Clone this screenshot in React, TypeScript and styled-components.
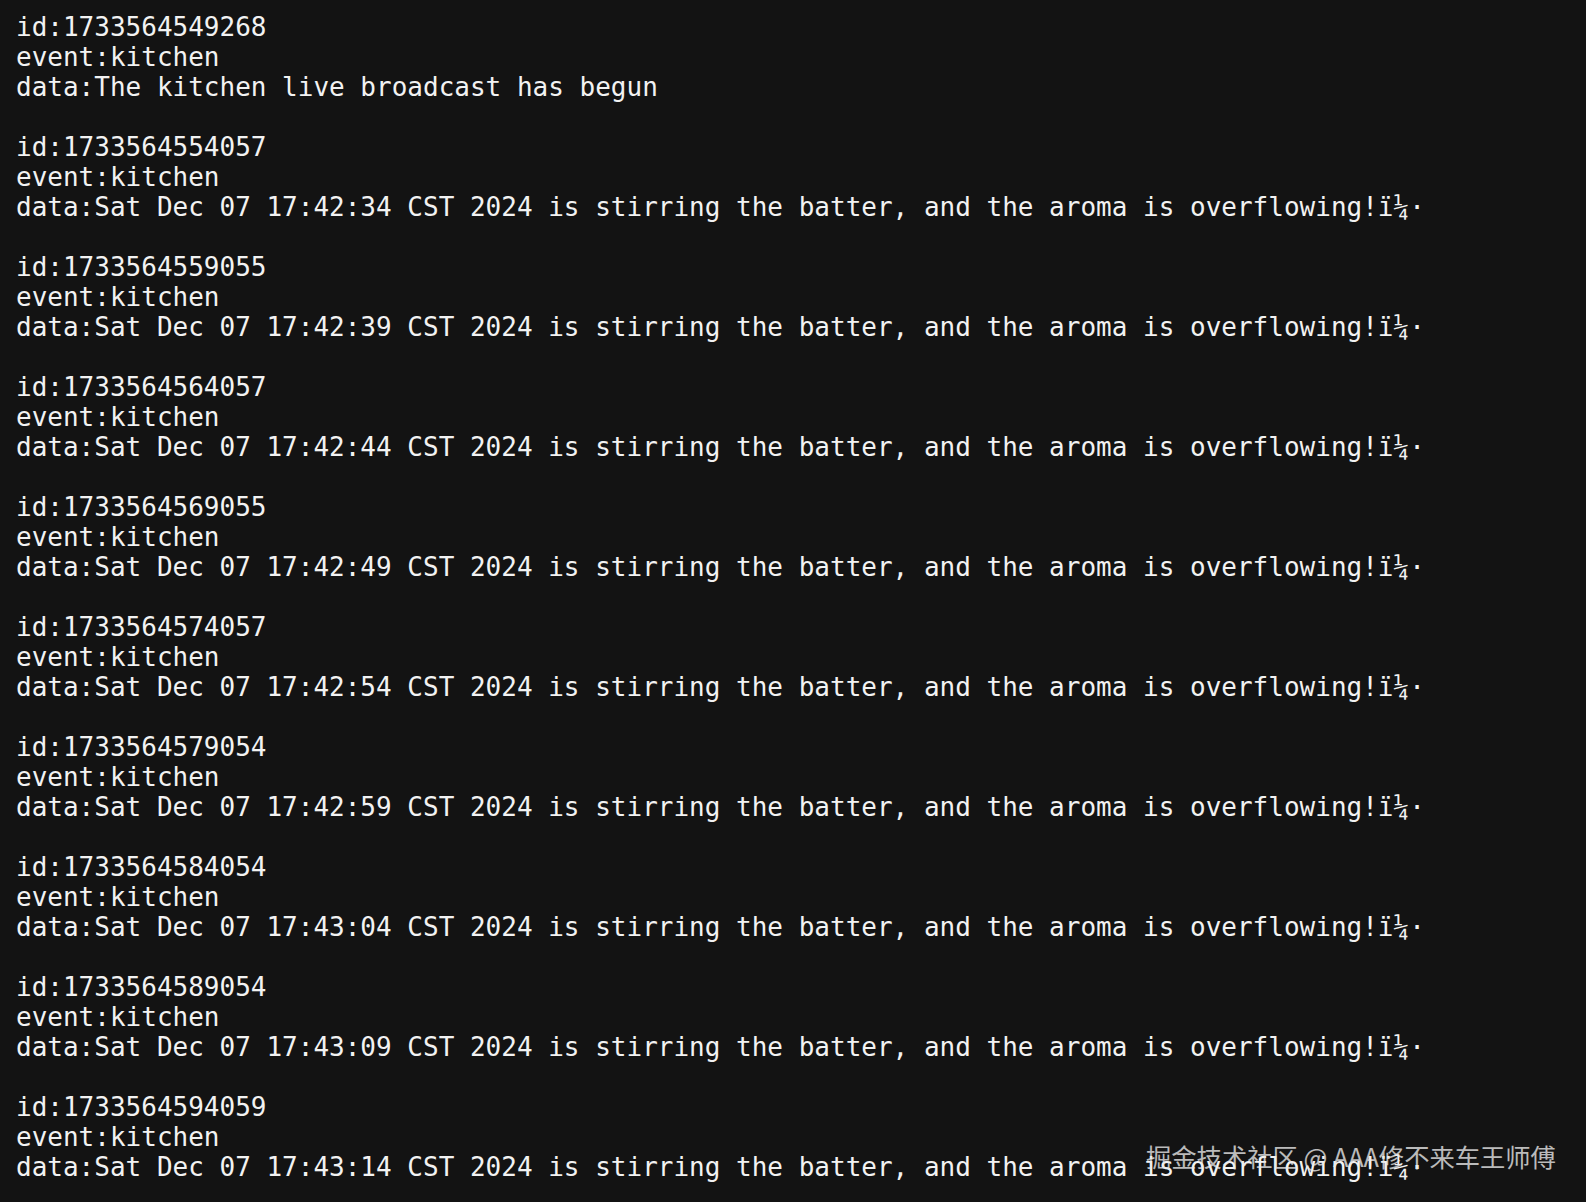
import React from "react";
import styled, { createGlobalStyle } from "styled-components";

const Global = createGlobalStyle`
  html, body {
    margin: 0;
    padding: 0;
    background: #131313;
  }
  #root {
    min-height: 100vh;
    background: #131313;
  }
`;

const Screen = styled.div`
  position: relative;
  min-height: 1202px;
  box-sizing: border-box;
  padding: 12px 0 0 16px;
  background: #131313;
  overflow: hidden;
`;

const Log = styled.pre`
  margin: 0;
  font-family: "DejaVu Sans Mono", "Liberation Mono", monospace;
  font-size: 26px;
  line-height: 30px;
  color: #f2f2f2;
  white-space: pre;
`;

const Watermark = styled.div`
  position: absolute;
  left: 1146px;
  top: 1138px;
  font-family: "Noto Sans CJK SC", "Noto Sans", sans-serif;
  font-size: 25.3px;
  line-height: 36px;
  color: rgba(235, 235, 235, 0.78);
  white-space: nowrap;
`;

const first = {
  id: "1733564549268",
  data: "The kitchen live broadcast has begun",
};

const entries: [string, string][] = [
  ["1733564554057", "17:42:34"],
  ["1733564559055", "17:42:39"],
  ["1733564564057", "17:42:44"],
  ["1733564569055", "17:42:49"],
  ["1733564574057", "17:42:54"],
  ["1733564579054", "17:42:59"],
  ["1733564584054", "17:43:04"],
  ["1733564589054", "17:43:09"],
  ["1733564594059", "17:43:14"],
];

export default function App() {
  const lines: string[] = [
    `id:${first.id}`,
    "event:kitchen",
    `data:${first.data}`,
  ];
  entries.forEach(([id, t]) => {
    lines.push("");
    lines.push(`id:${id}`);
    lines.push("event:kitchen");
    lines.push(
      `data:Sat Dec 07 ${t} CST 2024 is stirring the batter, and the aroma is overflowing!\u00ef\u00bc\u00b7`
    );
  });
  return (
    <>
      <Global />
      <Screen>
        <Log>{lines.join("\n")}</Log>
        <Watermark>掘金技术社区 @ AAA修不来车王师傅</Watermark>
      </Screen>
    </>
  );
}
